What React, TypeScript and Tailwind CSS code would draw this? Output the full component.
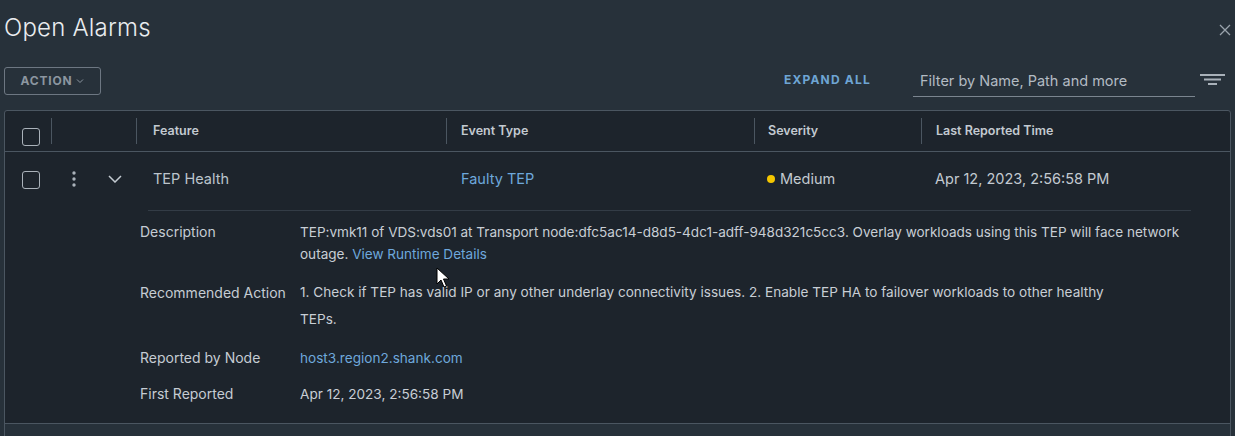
import React from 'react';

// Open Alarms panel with one expanded alarm row
const columns = [
  { label: 'Feature', pad: 'pl-[16px]' },
  { label: 'Event Type', pad: 'pl-[14px]' },
  { label: 'Severity', pad: 'pl-[13px]' },
  { label: 'Last Reported Time', pad: 'pl-[14px]' },
];

function Checkbox() {
  return <div className="w-[18px] h-[18px] rounded-[3px] border border-[#aab2ba]" />;
}

function Cursor() {
  return (
    <svg className="absolute left-[436px] top-[267px]" width="14" height="22" viewBox="0 0 14 22">
      <path d="M1 1 L1 17 L5 13 L8 20 L10.5 19 L7.5 12 L13 12 Z" fill="#ffffff" stroke="#000000" strokeWidth="1" strokeLinejoin="round" />
    </svg>
  );
}

export default function App() {
  return (
    <div className="relative w-[1235px] h-[436px] overflow-hidden bg-[#27313a] font-['Inter',sans-serif] text-[#c8ced5]">
      {/* Title bar */}
      <div className="flex items-start justify-between pl-[4px] pr-[4px] pt-[12px]">
        <h1 className="text-[24px] leading-[32px] font-light text-[#e9ecef] tracking-[0.2px]">Open Alarms</h1>
        <svg className="mt-[12px]" width="12" height="12" viewBox="0 0 12 12">
          <path d="M1 1 L11 11 M11 1 L1 11" stroke="#9aa3ac" strokeWidth="1.3" />
        </svg>
      </div>

      {/* Toolbar */}
      <div className="flex items-center pl-[4px] mt-[23px] h-[28px]">
        <button className="h-[28px] w-[97px] rounded-[3px] border border-[#6d7782] text-[12px] font-bold tracking-[0.8px] text-[#8c96a0] flex items-center justify-center gap-[4px]">
          ACTION
          <svg width="8" height="6" viewBox="0 0 8 6">
            <path d="M1 1.5 L4 4.5 L7 1.5" stroke="#8c96a0" strokeWidth="1" fill="none" />
          </svg>
        </button>
        <div className="flex-1" />
        <span className="text-[12px] font-bold tracking-[1.2px] text-[#6ea5d4] mr-[42px] mt-[-2px]">EXPAND ALL</span>
        <div className="w-[282px] h-[28px] border-b border-[#7b858f] flex items-center pl-[7px] pb-[3px] mt-[3px]">
          <span className="text-[14.5px] text-[#b3bbc3]">Filter by Name, Path and more</span>
        </div>
        <svg className="ml-[5px] mr-[10px] mt-[-2px]" width="25" height="12" viewBox="0 0 25 12">
          <rect x="0" y="0" width="25" height="2" fill="#a9b1b9" />
          <rect x="4" y="4.5" width="17" height="2" fill="#a9b1b9" />
          <rect x="8" y="9" width="9" height="2" fill="#a9b1b9" />
        </svg>
      </div>

      {/* Data grid */}
      <div className="mx-[4px] mt-[15px] border border-[#4b5661] rounded-t-[3px] bg-[#1d242c]">
        {/* Header row */}
        <div className="grid grid-cols-[46px_85px_310px_308px_167px_1fr] h-[41px] border-b border-[#4b5661]">
          <div className="pl-[17px] pt-[17px]">
            <Checkbox />
          </div>
          <div className="border-l border-[#4b5661] my-[7px]" />
          {columns.map((c) => (
            <div key={c.label} className={`border-l border-[#4b5661] my-[7px] pt-[4px] text-[12.5px] font-semibold text-[#c3cad1] ${c.pad}`}>
              {c.label}
            </div>
          ))}
        </div>

        {/* Alarm row */}
        <div className="grid grid-cols-[46px_85px_310px_308px_167px_1fr] h-[54px] items-center text-[14.5px]">
          <div className="pl-[17px] pt-[2px]">
            <Checkbox />
          </div>
          <div className="flex items-center pl-[21px] gap-[32px]">
            <svg width="4" height="16" viewBox="0 0 4 16">
              <circle cx="2" cy="2" r="1.7" fill="#aab2ba" />
              <circle cx="2" cy="8" r="1.7" fill="#aab2ba" />
              <circle cx="2" cy="14" r="1.7" fill="#aab2ba" />
            </svg>
            <svg width="14" height="8" viewBox="0 0 14 8">
              <path d="M1 1 L7 7 L13 1" stroke="#c3cad1" strokeWidth="1.5" fill="none" />
            </svg>
          </div>
          <div className="pl-[17px] text-[#bcc4cc]">TEP Health</div>
          <div className="pl-[15px] text-[#6ea8dc]">Faulty TEP</div>
          <div className="pl-[13px] flex items-center gap-[5px] text-[#c3cad1]">
            <span className="w-[8px] h-[8px] rounded-full bg-[#f4c600]" />
            Medium
          </div>
          <div className="pl-[14px] text-[#c3cad1]">Apr 12, 2023, 2:56:58 PM</div>
        </div>

        {/* Expanded details */}
        <div className="ml-[143px] mr-[39px] mt-[4px] border-t border-[#333c46]" />
        <div className="pl-[135px] pt-[10px] pb-[18px] text-[14px] grid grid-cols-[160px_1fr] gap-y-[14px]">
          <div className="leading-[22px] text-[#c5ccd3]">Description</div>
          <div className="leading-[22px] text-[13.55px]">
            TEP:vmk11 of VDS:vds01 at Transport node:dfc5ac14-d8d5-4dc1-adff-948d321c5cc3. Overlay workloads using this TEP will face network
            <br />
            outage. <span className="text-[#6ea8dc]">View Runtime Details</span>
          </div>

          <div className="leading-[27px] text-[#c5ccd3]">Recommended Action</div>
          <div className="leading-[27px] text-[13.6px]">
            1. Check if TEP has valid IP or any other underlay connectivity issues. 2. Enable TEP HA to failover workloads to other healthy
            <br />
            TEPs.
          </div>

          <div className="leading-[22px] text-[#c5ccd3]">Reported by Node</div>
          <div className="leading-[22px] text-[13.6px] text-[#6ea8dc]">host3.region2.shank.com</div>

          <div className="leading-[22px] text-[#c5ccd3]">First Reported</div>
          <div className="leading-[22px] text-[13.6px]">Apr 12, 2023, 2:56:58 PM</div>
        </div>
        <div className="h-[20px] border-t border-[#4b5661] bg-[#27313a]" />
      </div>

      <Cursor />
    </div>
  );
}
